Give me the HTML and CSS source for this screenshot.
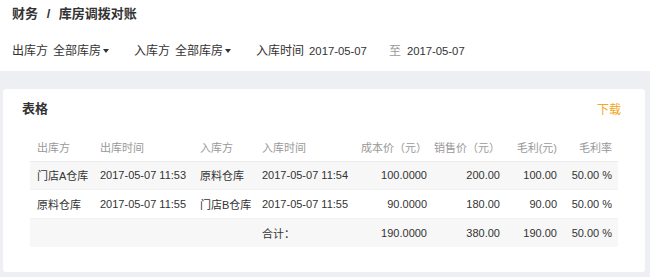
FILE: index.html
```html
<!DOCTYPE html>
<html lang="zh">
<head>
<meta name="viewport" content="width=device-width, initial-scale=1">
<link rel="stylesheet" href="styles.css">
</head>
<body>
	<div id="header">
		<div class="breadcrumb">财务 <span class="sep">/</span> 库房调拨对账</div>
		<div class="filters">
			<span class="label">出库方</span>
			<span class="select">全部库房<i class="caret"></i></span>
			<span class="label">入库方</span>
			<span class="select">全部库房<i class="caret"></i></span>
			<span class="label">入库时间</span>
			<span class="date">2017-05-07</span>
			<span class="to">至</span>
			<span class="date">2017-05-07</span>
		</div>
	</div>

	<div id="main">
		<div class="card">
			<div class="card-head">
				<span class="card-title">表格</span>
				<a class="download">下载</a>
			</div>
			<table>
				<thead>
					<tr>
						<th class="c1">出库方</th>
						<th class="c2">出库时间</th>
						<th class="c3">入库方</th>
						<th class="c4">入库时间</th>
						<th class="num c5">成本价（元）</th>
						<th class="num c6">销售价（元）</th>
						<th class="num c7">毛利(元)</th>
						<th class="num c8">毛利率</th>
					</tr>
				</thead>
				<tbody>
					<tr class="odd">
						<td>门店A仓库</td>
						<td>2017-05-07 11:53</td>
						<td>原料仓库</td>
						<td>2017-05-07 11:54</td>
						<td class="num">100.0000</td>
						<td class="num">200.00</td>
						<td class="num">100.00</td>
						<td class="num">50.00 %</td>
					</tr>
					<tr>
						<td>原料仓库</td>
						<td>2017-05-07 11:55</td>
						<td>门店B仓库</td>
						<td>2017-05-07 11:55</td>
						<td class="num">90.0000</td>
						<td class="num">180.00</td>
						<td class="num">90.00</td>
						<td class="num">50.00 %</td>
					</tr>
					<tr class="odd">
						<td></td>
						<td></td>
						<td></td>
						<td>合计：</td>
						<td class="num">190.0000</td>
						<td class="num">380.00</td>
						<td class="num">190.00</td>
						<td class="num">50.00 %</td>
					</tr>
				</tbody>
			</table>
		</div>
	</div>
</body>
</html>
```

FILE: styles.css
```css
:root {
	--text:#333333;
	--muted:#999999;
	--bg-grey:#eeeff3;
	--stripe:#f7f7f7;
	--orange:#f5a623;
}

* {
	box-sizing:border-box;
	font-family:"Helvetica Neue", "Liberation Sans", "Noto Sans CJK SC", sans-serif;
}

html, body {
	margin:0;
	height:100%;
	background-color:var(--bg-grey);
	color:var(--text);
	font-size:12px;
}

#header{
	background-color:white;
	height:71px;
	padding:6px 12px 0;
}

.breadcrumb{
	font-size:13px;
	font-weight:bold;
	line-height:16px;
}

.breadcrumb .sep{
	margin:0 5px;
}

.filters{
	display:flex;
	align-items:center;
	margin-top:22px;
	line-height:14px;
}

.label{
	margin-right:5px;
}

.select{
	display:flex;
	align-items:center;
	margin-right:25px;
}

.caret{
	display:inline-block;
	width:0;
	height:0;
	margin-left:2px;
	border-left:3px solid transparent;
	border-right:3px solid transparent;
	border-top:4px solid var(--text);
}

.date{
	font-size:11.3px;
}

.to{
	color:var(--muted);
	margin:0 6px 0 22px;
}

#main{
	padding:18px 5px 5px 3px;
}

.card{
	background-color:white;
	border-radius:3px;
	padding:11px 24px 25px 19px;
}

.card-head{
	display:flex;
	justify-content:space-between;
	align-items:center;
	line-height:14px;
}

.card-title{
	font-size:13px;
	font-weight:bold;
}

.download{
	color:var(--orange);
	font-size:12px;
	margin-top:3px;
}

table{
	margin:16px 3px 0 8px;
	width:588px;
	table-layout:fixed;
	border-collapse:collapse;
	font-size:11px;
}

th, td{
	text-align:left;
	padding:0 6px 0 7px;
	height:28px;
	white-space:nowrap;
	font-weight:normal;
}

th{
	color:var(--muted);
	border-bottom:1px solid #ebebeb;
}

td{
	height:28.5px;
}

th.num, td.num{
	text-align:right;
	padding-left:0;
}

tr.odd td{
	background-color:var(--stripe);
}

tbody tr + tr td{
	border-top:1px solid #f2f2f2;
}

.c1{ width:63px; }
.c2{ width:100px; }
.c3{ width:62px; }
.c4{ width:104px; }
.c5{ width:74px; }
.c6{ width:73px; }
.c7{ width:57px; }
.c8{ width:55px; }
```
